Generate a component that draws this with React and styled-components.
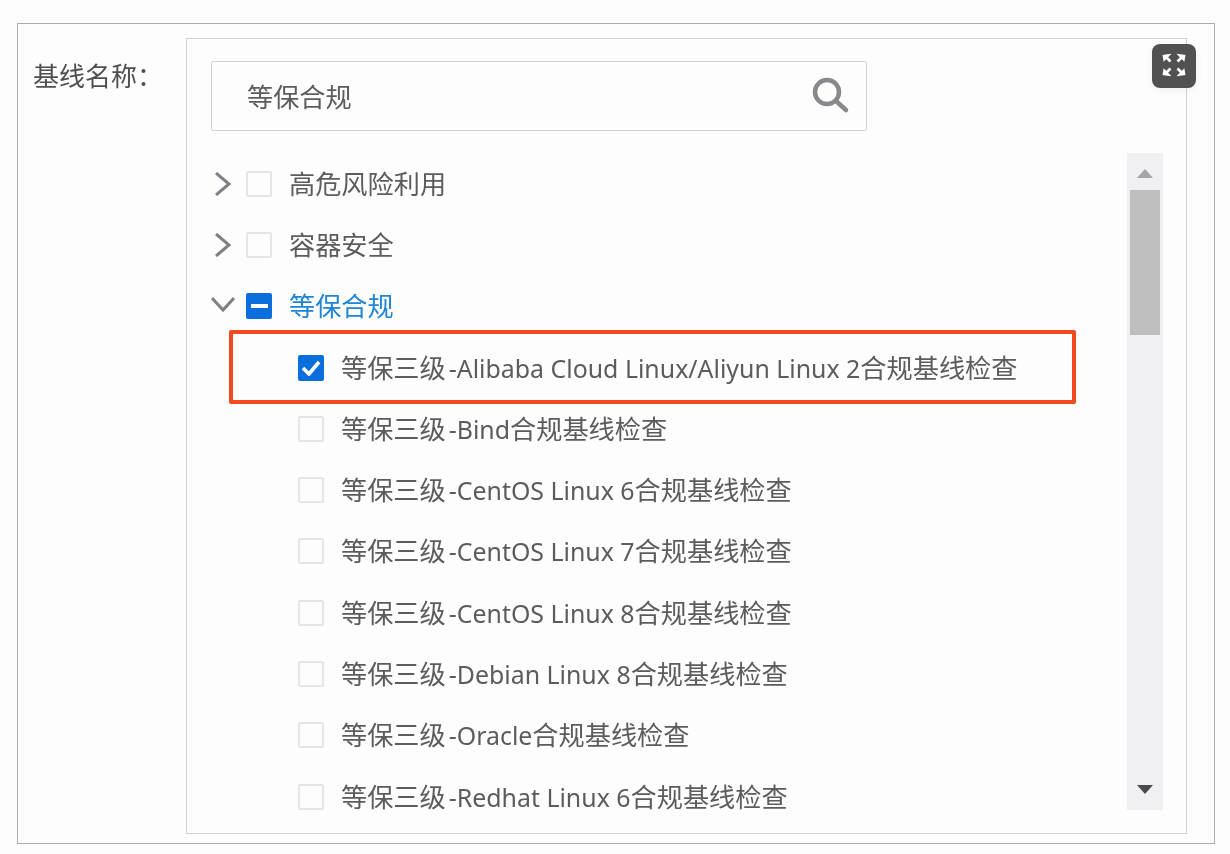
import React from 'react';
import styled, { createGlobalStyle } from 'styled-components';

const GlobalStyle = createGlobalStyle`
  html, body {
    margin: 0;
    padding: 0;
    background: #fdfdfe;
  }
  body {
    font-family: "Noto Sans", "Noto Sans CJK SC", sans-serif;
  }
`;

const Page = styled.div`
  width: 1230px;
  height: 854px;
  padding: 23px 15px 10px 17px;
  box-sizing: border-box;
  overflow: hidden;
  filter: blur(0.6px);
`;

const Frame = styled.div`
  position: relative;
  height: 100%;
  box-sizing: border-box;
  border: 1px solid #a9abae;
  padding: 14px 27px 9px 15px;
  display: flex;
`;

const FieldLabel = styled.div`
  width: 153px;
  flex-shrink: 0;
  padding-top: 22px;
  font-size: 26px;
  line-height: 32px;
  white-space: nowrap;
  color: #4f4f4f;
`;

const Panel = styled.div`
  flex: 1;
  min-width: 0;
  box-sizing: border-box;
  border: 1px solid #d0d1d4;
  padding: 22px 23px 0 24px;
  overflow: hidden;
`;

const SearchBox = styled.div`
  width: 656px;
  height: 70px;
  box-sizing: border-box;
  border: 1px solid #d2d3d6;
  border-radius: 2px;
  padding: 0 16px 0 35px;
  display: flex;
  align-items: center;
  justify-content: space-between;
  font-size: 26.2px;
  color: #5c5c5c;
`;

const Tree = styled.div`
  margin-top: 22px;
  display: flex;
  justify-content: space-between;
`;

const List = styled.div`
  width: 860px;
`;

const Row = styled.div`
  height: 61.3px;
  display: flex;
  align-items: center;
  padding-left: ${({ $child }) => ($child ? '87px' : '0')};
  white-space: nowrap;
  color: ${({ $active }) => ($active ? '#1f85d6' : '#5c5c5c')};
`;

const Caret = styled.svg`
  width: 24px;
  height: 24px;
  margin-right: 11px;
  flex-shrink: 0;
  color: #7f8086;
`;

const Box = styled.span`
  width: 26px;
  height: 26px;
  flex-shrink: 0;
  margin-right: 17px;
  box-sizing: border-box;
  border-radius: 2px;
  display: flex;
  align-items: center;
  justify-content: center;
  background: ${({ $on }) => ($on ? '#0a6fdc' : '#fdfdfe')};
  border: ${({ $on }) => ($on ? 'none' : '2px solid #e4e4e9')};
`;

const Dash = styled.span`
  width: 17px;
  height: 4px;
  background: #fff;
`;

const RowText = styled.span`
  font-size: 26.2px;
  line-height: 34px;
`;

// the latin part of the names runs a little smaller than the chinese
const Latin = styled.span`
  font-size: 24.9px;
  padding-left: 3px;
`;

const Scrollbar = styled.div`
  width: 36px;
  height: 657px;
  background: #f0f0f2;
  display: flex;
  flex-direction: column;
  align-items: center;
  flex-shrink: 0;
  padding-top: 16px;
  box-sizing: border-box;
`;

const Arrow = styled.span`
  width: 0;
  height: 0;
  border-left: 8px solid transparent;
  border-right: 8px solid transparent;
  ${({ $down }) => ($down
    ? 'border-top: 9px solid #4a4a4c; margin-top: auto; margin-bottom: 16px;'
    : 'border-bottom: 9px solid #a5a5a7;')}
`;

const Thumb = styled.div`
  width: 30px;
  height: 145px;
  margin-top: 12px;
  background: #bfbebf;
`;

// highlight drawn on top of the first child row
const Highlight = styled.div`
  position: absolute;
  left: 211px;
  top: 306px;
  width: 847px;
  height: 74px;
  box-sizing: border-box;
  border: 4px solid #f3491f;
  border-radius: 2px;
  pointer-events: none;
`;

const ExpandButton = styled.div`
  position: absolute;
  left: 1134px;
  top: 20px;
  width: 44px;
  height: 44px;
  padding-bottom: 3px;
  box-sizing: border-box;
  border-radius: 8px;
  background: #525152;
  box-shadow: 0 2px 8px rgba(0, 0, 0, 0.06);
  display: flex;
  align-items: center;
  justify-content: center;
`;

const ChevronRight = () => (
  <Caret viewBox="0 0 24 24" fill="none" stroke="currentColor" strokeWidth="3">
    <path d="M5 1l13 11L5 23" />
  </Caret>
);

const ChevronDown = () => (
  <Caret viewBox="0 0 24 24" fill="none" stroke="currentColor" strokeWidth="3">
    <path d="M1 4l11 12L23 4" />
  </Caret>
);

const SearchIcon = () => (
  <svg width="38" height="38" viewBox="0 0 38 38" fill="none" stroke="#88888d" strokeWidth="4.5">
    <circle cx="15" cy="15" r="12" />
    <path d="M24 24l10 9" strokeLinecap="round" />
  </svg>
);

const ExpandIcon = () => (
  <svg width="24" height="24" viewBox="0 0 24 24" fill="#fff" stroke="#fff" strokeWidth="2.6">
    <path d="M2 3l4-.5L2.5 6zM4 4l4.5 4.5" />
    <path d="M22 3l-4-.5L21.5 6zM20 4l-4.5 4.5" />
    <path d="M2 21l4 .5L2.5 18zM4 20l4.5-4.5" />
    <path d="M22 21l-4 .5 3.5-3.5zM20 20l-4.5-4.5" />
  </svg>
);

const children = [
  { latin: '-Alibaba Cloud Linux/Aliyun Linux 2', on: true },
  { latin: '-Bind' },
  { latin: '-CentOS Linux 6' },
  { latin: '-CentOS Linux 7' },
  { latin: '-CentOS Linux 8' },
  { latin: '-Debian Linux 8' },
  { latin: '-Oracle' },
  { latin: '-Redhat Linux 6' },
];

const App = () => {
  return (
    <>
      <GlobalStyle />
      <Page>
        <Frame>
          <FieldLabel>基线名称：</FieldLabel>
          <Panel>
            <SearchBox>
              等保合规
              <SearchIcon />
            </SearchBox>
            <Tree>
              <List>
                <Row>
                  <ChevronRight />
                  <Box />
                  <RowText>高危风险利用</RowText>
                </Row>
                <Row>
                  <ChevronRight />
                  <Box />
                  <RowText>容器安全</RowText>
                </Row>
                <Row $active>
                  <ChevronDown />
                  <Box $on><Dash /></Box>
                  <RowText>等保合规</RowText>
                </Row>
                {children.map((item) => (
                  <Row $child key={item.latin}>
                    <Box $on={item.on}>
                      {item.on && (
                        <svg width="20" height="16" viewBox="0 0 20 16" fill="none" stroke="#fff" strokeWidth="3.6">
                          <path d="M2 8l6 6L18 2" />
                        </svg>
                      )}
                    </Box>
                    <RowText>等保三级<Latin>{item.latin}</Latin>合规基线检查</RowText>
                  </Row>
                ))}
              </List>
              <Scrollbar>
                <Arrow />
                <Thumb />
                <Arrow $down />
              </Scrollbar>
            </Tree>
          </Panel>
          <Highlight />
          <ExpandButton>
            <ExpandIcon />
          </ExpandButton>
        </Frame>
      </Page>
    </>
  );
};

export default App;
